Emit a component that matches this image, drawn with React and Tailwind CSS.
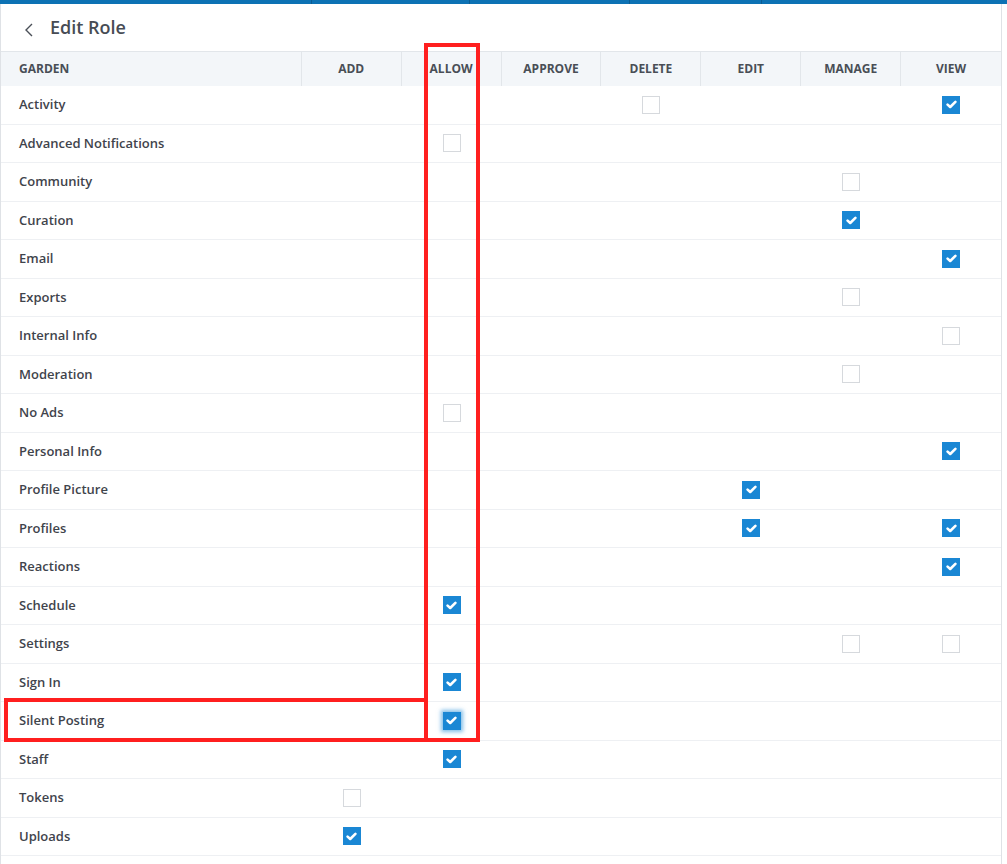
import React from "react";

const columns = ["ADD", "ALLOW", "APPROVE", "DELETE", "EDIT", "MANAGE", "VIEW"];

// value per column: true = checked, false = unchecked, undefined = none
const rows = [
  { name: "Activity", perms: { DELETE: false, VIEW: true } },
  { name: "Advanced Notifications", perms: { ALLOW: false } },
  { name: "Community", perms: { MANAGE: false } },
  { name: "Curation", perms: { MANAGE: true } },
  { name: "Email", perms: { VIEW: true } },
  { name: "Exports", perms: { MANAGE: false } },
  { name: "Internal Info", perms: { VIEW: false } },
  { name: "Moderation", perms: { MANAGE: false } },
  { name: "No Ads", perms: { ALLOW: false } },
  { name: "Personal Info", perms: { VIEW: true } },
  { name: "Profile Picture", perms: { EDIT: true } },
  { name: "Profiles", perms: { EDIT: true, VIEW: true } },
  { name: "Reactions", perms: { VIEW: true } },
  { name: "Schedule", perms: { ALLOW: true } },
  { name: "Settings", perms: { MANAGE: false, VIEW: false } },
  { name: "Sign In", perms: { ALLOW: true } },
  { name: "Silent Posting", perms: { ALLOW: true }, focused: true },
  { name: "Staff", perms: { ALLOW: true } },
  { name: "Tokens", perms: { ADD: false } },
  { name: "Uploads", perms: { ADD: true } },
];

function Checkbox({ checked, focused }) {
  if (!checked) {
    return <span className="block w-[18px] h-[18px] bg-white border border-[#d6d9dd]" />;
  }
  return (
    <span
      className={
        "flex items-center justify-center w-[18px] h-[18px] bg-[#1a87d4] " +
        (focused ? "shadow-[0_0_4px_2px_rgba(26,135,212,0.55)]" : "")
      }
    >
      <svg width="11" height="9" viewBox="0 0 11 9" fill="none">
        <path d="M1.6 4.6 L4.2 7 L9.4 1.8" stroke="white" strokeWidth="2.6" strokeLinecap="round" strokeLinejoin="round" />
      </svg>
    </span>
  );
}

export default function App() {
  return (
    <div
      className="relative w-[1007px] h-[864px] bg-white overflow-hidden"
      style={{ fontFamily: '"Open Sans", "Liberation Sans", sans-serif' }}
    >
      {/* top tab strip, cut off */}
      <div className="flex h-[4px] bg-[#0d72b4]">
        <div className="w-[312px] border-r border-[#0a5c94]" />
        <div className="w-[158px] border-r border-[#0a5c94]" />
        <div className="w-[160px] border-r border-[#0a5c94]" />
        <div className="w-[132px] border-r border-[#0a5c94]" />
      </div>

      <div className="w-[1002px] h-[860px] border-l border-r border-[#dfe2e6]">
        <div className="flex items-center h-[47px] pl-[22px]">
          <svg width="12" height="16" viewBox="0 0 12 16" fill="none" className="mt-[4px]">
            <path d="M9 2 L3 8 L9 14" stroke="#4a4f57" strokeWidth="1.4" />
          </svg>
          <h1 className="ml-[15px] text-[18px] font-semibold text-[#474c54]">Edit Role</h1>
        </div>

        <div className="flex h-[35px] bg-[#f3f6f9] border-t border-[#e2e6ea] text-[12px] font-bold text-[#494e56]">
          <div className="w-[301px] flex items-center pl-[18px] border-r border-[#e2e6ea]">GARDEN</div>
          {columns.map((c, i) => (
            <div
              key={c}
              className={
                "w-[100px] flex items-center justify-center " +
                (i < columns.length - 1 ? "border-r border-[#e2e6ea]" : "")
              }
            >
              {c}
            </div>
          ))}
        </div>

        {rows.map((r) => (
          <div key={r.name} className="flex h-[38.5px] border-b border-[#eef0f3] text-[13px] font-semibold text-[#3f444c]">
            <div className="w-[301px] flex items-center pl-[18px]">{r.name}</div>
            {columns.map((c) => (
              <div key={c} className="w-[100px] flex items-center justify-center">
                {r.perms[c] !== undefined && <Checkbox checked={r.perms[c]} focused={r.focused} />}
              </div>
            ))}
          </div>
        ))}
      </div>

      {/* red annotation boxes */}
      <div className="absolute left-[424px] top-[43px] w-[56px] h-[699px] border-[4px] border-[#ff1f1f]" />
      <div className="absolute left-[4px] top-[698px] w-[424px] h-[44px] border-[4px] border-[#ff1f1f]" />
    </div>
  );
}
